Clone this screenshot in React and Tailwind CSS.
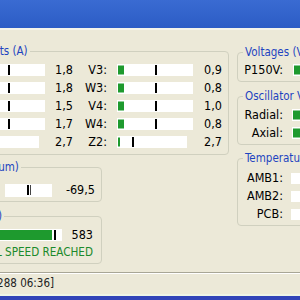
import React from "react";

const font = { fontFamily: '"DejaVu Sans Condensed", "DejaVu Sans", Tahoma, sans-serif' };

const currents = [
  { l: "U3:", lv: "1,8", lt: 38, r: "V3:", rv: "0,9", rt: 38, g: 6 },
  { l: "X3:", lv: "1,8", lt: 38, r: "W3:", rv: "0,8", rt: 38, g: 6 },
  { l: "U4:", lv: "1,5", lt: 38, r: "V4:", rv: "1,0", rt: 38, g: 6 },
  { l: "X4:", lv: "1,7", lt: 38, r: "W4:", rv: "0,8", rt: 38, g: 6 },
  { l: "Z1:", lv: "2,7", lt: null, r: "Z2:", rv: "2,7", rt: 15, g: 2, short: true },
];

function Bar({ className, fill = 0, fillH = 9, tick, double }) {
  return (
    <div className={"relative h-[12px] bg-white shrink-0 " + className}>
      {fill > 0 && (
        <div
          className="absolute left-[1px] top-1/2 -translate-y-1/2 bg-[#1e9a2e]"
          style={{ width: fill, height: fillH }}
        />
      )}
      {tick != null && (
        <div className="absolute top-[1px] h-[10px] flex gap-[1px]" style={{ left: tick }}>
          <div className="w-[2px] h-full bg-black" />
          {double && <div className="w-[1px] h-full bg-[#444]" />}
        </div>
      )}
    </div>
  );
}

function Group({ title, className, legendClass, children }) {
  return (
    <fieldset className={"border border-[#d0d0bf] rounded-[4px] " + className}>
      <legend className={"px-[2px] leading-[14px] text-[11.5px] text-[#1e44c0] whitespace-nowrap " + legendClass}>
        {title}
      </legend>
      {children}
    </fieldset>
  );
}

export default function App() {
  return (
    <div className="w-[300px] h-[300px] overflow-hidden bg-[#ece9d8] flex flex-col text-[12.5px] text-black" style={font}>
      <div className="h-[28px] shrink-0 bg-linear-to-b from-[#3a6bd2] to-[#2c5cc5]" />
      <div className="h-[2px] shrink-0 bg-[#f4f3ea]" />

      <div className="flex-1 flex gap-[8px] pt-[14px]">
        <div className="w-[339px] -ml-[110px] shrink-0 flex flex-col items-start">
          <Group title="Currents (A)" className="w-[339px] pl-[6px] pr-[6px] pt-[3px] pb-[3px]" legendClass="ml-[66px]">
            {currents.map((c) => (
              <div key={c.r} className="flex items-center h-[18px]">
                <div className="w-[70px] text-right">{c.l}</div>
                <Bar className={"ml-[3px] " + (c.short ? "w-[69px] mr-[6px]" : "w-[75px]")} tick={c.lt} />
                <div className="w-[28px] text-right">{c.lv}</div>
                <div className="w-[34px] text-right">{c.r}</div>
                <Bar
                  className={"ml-[10px] " + (c.short ? "w-[70px] mr-[6px]" : "w-[76px]")}
                  fill={c.g}
                  tick={c.rt}
                />
                <div className="w-[29px] text-right">{c.rv}</div>
              </div>
            ))}
          </Group>

          <Group title="Pressure (Vacuum)" className="mt-[5px] w-[212px] pl-[6px] pr-[6px] pt-[7px] pb-[2px]" legendClass="ml-[23px]">
            <div className="flex items-center h-[18px]">
              <div className="w-[100px] text-right">P1:</div>
              <Bar className="ml-[8px] w-[47px] h-[13px]" tick={22} double />
              <div className="w-[43px] text-right">-69,5</div>
            </div>
          </Group>

          <Group title="Speed (Hz)" className="mt-[7px] w-[212px] pl-[6px] pr-[8px] pt-[3px] pb-[1px]" legendClass="ml-[46px]">
            <div className="flex items-center h-[18px]">
              <div className="w-[80px] text-right">n:</div>
              <Bar className="ml-[3px] w-[82px]" fill={71} fillH={10} tick={74} />
              <div className="w-[31px] text-right">583</div>
            </div>
            <div className="h-[18px] flex items-center justify-end text-[11.6px] text-[#1b8a2b] whitespace-nowrap">
              FULL SPEED REACHED
            </div>
          </Group>
        </div>

        <div className="w-[100px] shrink-0 flex flex-col items-start">
          <Group title="Voltages (V)" className="mt-[1px] w-[100px] pl-[4px] pt-[2px] pb-[2px]" legendClass="ml-[1px]">
            <div className="flex items-center h-[18px]">
              <div className="w-[41px] text-right">P150V:</div>
              <Bar className="ml-[10px] w-[40px]" fill={20} />
            </div>
          </Group>

          <Group title="Oscillator Voltage" className="mt-[7px] w-[100px] pl-[4px] pt-[3px] pb-[2px]" legendClass="ml-[1px]">
            {["Radial:", "Axial:"].map((l) => (
              <div key={l} className="flex items-center h-[18px]">
                <div className="w-[41px] text-right">{l}</div>
                <Bar className="ml-[9px] w-[40px]" fill={20} />
              </div>
            ))}
          </Group>

          <Group title="Temperatures (°C)" className="mt-[6px] w-[100px] pl-[4px] pt-[4px] pb-[2px]" legendClass="ml-[1px]">
            {["AMB1:", "AMB2:", "PCB:"].map((l) => (
              <div key={l} className="flex items-center h-[18px]">
                <div className="w-[41px] text-right">{l}</div>
                <div className="ml-[8px] w-[40px] h-[11px] bg-white" />
              </div>
            ))}
          </Group>
        </div>
      </div>

      <div className="h-[1px] shrink-0 bg-[#a8a696]" />
      <div className="h-[1px] shrink-0 bg-white" />
      <div className="h-[20px] shrink-0 flex items-center">
        <div className="w-[54px] flex justify-end whitespace-nowrap text-[11.5px] text-[#222]">[Operating hours: 12288 06:36]</div>
      </div>
      <div className="h-[2px] shrink-0 bg-[#eef4e6]" />
      <div className="h-[4px] shrink-0 bg-[#3043b8]" />
    </div>
  );
}
